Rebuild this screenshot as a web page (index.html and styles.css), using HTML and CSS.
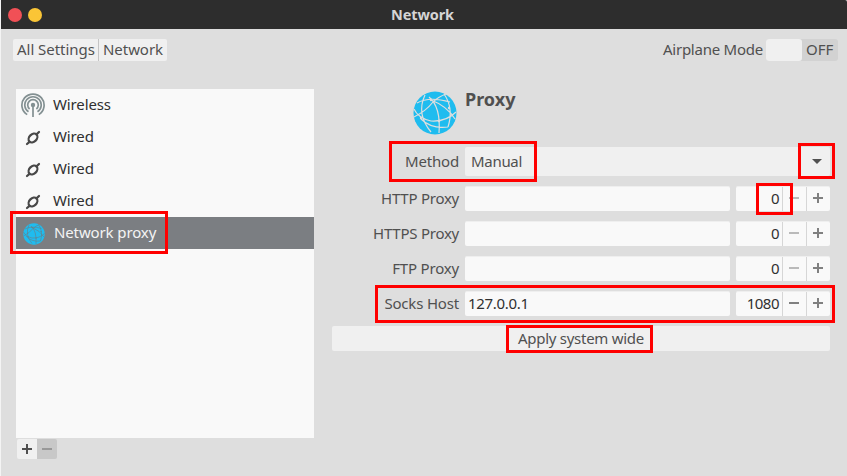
FILE: index.html
```html
<!DOCTYPE html>
<html lang="en">
<head>
<meta charset="utf-8">
<title>Network</title>
<link rel="stylesheet" href="styles.css">
</head>
<body>
<svg class="defs" aria-hidden="true">
  <symbol id="globe" viewBox="0 0 44 44">
    <circle cx="22" cy="22" r="21.5" fill="#1fbcef"/>
    <g fill="none" stroke="currentColor" stroke-width="1.2">
      <path d="M4 12Q16 5 37 11M16 6Q28 16 26 42M1 26Q13 20 20 11Q25 6 33 3M12 4Q3 23 18 41M1 18Q5 27 18 30Q33 31 43 21M18 9Q34 15 42 28M31 3Q41 17 35 36M8 28Q18 38 35 36"/>
    </g>
    <g fill="currentColor"><circle cx="18" cy="9" r="1.2"/><circle cx="8" cy="27" r="1.2"/><circle cx="26" cy="30" r="1.2"/><circle cx="36" cy="17" r="1.2"/></g>
  </symbol>
  <symbol id="wired" viewBox="0 0 16 16">
    <g fill="none" stroke="#484848" stroke-linecap="round"><path stroke-width="2.2" d="M2 14L4.5 11.8M11.5 4.4L14 2"/><ellipse cx="8" cy="8" rx="5" ry="3.7" transform="rotate(-45 8 8)" stroke-width="2.2"/></g>
  </symbol>
</svg>
<header class="titlebar"><i class="close"></i><i class="minimize"></i><h1>Network</h1></header>
<nav class="toolbar">
  <div class="crumbs"><span class="all">All Settings</span><span class="net">Network</span></div>
  <div class="airplane"><span>Airplane Mode</span><div class="switch"><b></b><span>OFF</span></div></div>
</nav>
<main>
  <aside>
    <ul>
      <li><svg class="wifi" viewBox="0 0 24 24"><g fill="none" stroke="#839092" stroke-width="1.7"><path d="M6.2 21.6A11.1 11.1 0 1 1 17.8 21.6M7.5 18.8A8.2 8.2 0 1 1 16.5 18.8M8.6 16A5.3 5.3 0 1 1 15.4 16"/><path d="M12 12V24"/></g><circle cx="12" cy="12" r="2.2" fill="#839092"/></svg><span>Wireless</span></li>
      <li><svg class="wire"><use href="#wired"/></svg><span>Wired</span></li>
      <li><svg class="wire"><use href="#wired"/></svg><span>Wired</span></li>
      <li><svg class="wire"><use href="#wired"/></svg><span>Wired</span></li>
      <li class="selected"><svg class="small-globe"><use href="#globe"/></svg><span>Network proxy</span></li>
    </ul>
    <div class="list-actions"><button class="plus" aria-label="Add"></button><button class="minus" aria-label="Remove"></button></div>
  </aside>
  <section>
    <div class="heading"><svg><use href="#globe"/></svg><h2>Proxy</h2></div>
    <div class="row method"><label>Method</label><div class="select"><span>Manual</span><i></i></div></div>
    <div class="row"><label class="http">HTTP Proxy</label><div class="field"></div><div class="spin"><span>0</span><button class="minus off" aria-label="Decrease"></button><button class="plus" aria-label="Increase"></button></div></div>
    <div class="row"><label class="https">HTTPS Proxy</label><div class="field"></div><div class="spin"><span>0</span><button class="minus off" aria-label="Decrease"></button><button class="plus" aria-label="Increase"></button></div></div>
    <div class="row"><label class="ftp">FTP Proxy</label><div class="field"></div><div class="spin"><span>0</span><button class="minus off" aria-label="Decrease"></button><button class="plus" aria-label="Increase"></button></div></div>
    <div class="row"><label class="socks">Socks Host</label><div class="field">127.0.0.1</div><div class="spin"><span>1080</span><button class="minus" aria-label="Decrease"></button><button class="plus" aria-label="Increase"></button></div></div>
    <button class="apply">Apply system wide</button>
  </section>
</main>
<div class="mark mark-nav"></div><div class="mark mark-method"></div><div class="mark mark-arrow"></div><div class="mark mark-port"></div><div class="mark mark-socks"></div><div class="mark mark-apply"></div>
</body>
</html>
```
FILE: styles.css
```css
* { box-sizing: border-box; }
body { margin: 0; width: 847px; height: 476px; overflow: hidden; position: relative; border-left: 1px solid #f4f4f4; background: #dedede; color: #505050; font: 15px/20px "Noto Sans", "Open Sans", sans-serif; letter-spacing: -.12px; white-space: nowrap; }
.defs { position: absolute; width: 0; height: 0; }
button { border: 0; padding: 0; font: inherit; color: inherit; letter-spacing: inherit; }
.titlebar { height: 29px; background: #2d2d2d; display: flex; align-items: center; padding-left: 7px; gap: 6px; border-radius: 0 2px 0 0; }
.titlebar i { width: 14px; height: 14px; border-radius: 50%; background: #f15056; }
.titlebar .minimize { background: #fac536; }
h1 { margin: 0 0 0 343px; padding-bottom: 2px; font-size: 14.5px; line-height: 26px; color: #d5d5d5; letter-spacing: -.1px; }
.toolbar { height: 60px; padding: 10px 9px 0 12px; display: flex; justify-content: space-between; align-items: flex-start; }
.crumbs { display: flex; height: 22px; background: #f0f0f0; border-radius: 2px; }
.all { width: 86px; padding-left: 4px; border-right: 1px solid #c4c4c4; letter-spacing: -.04px; }
.net { width: 68px; padding-left: 4px; letter-spacing: -.05px; }
.airplane { display: flex; gap: 3px; letter-spacing: -.24px; }
.switch { display: flex; width: 72px; height: 22px; border-radius: 3px; background: #d2d2d2; }
.switch b { width: 36px; background: #f0f0f0; border-radius: 3px; }
.switch span { padding-left: 4px; letter-spacing: 0; }
main { display: flex; align-items: flex-start; padding-left: 15px; gap: 18px; }
aside { width: 298px; }
ul { list-style: none; margin: 0; padding: 0; height: 349px; background: #f9f9f9; color: #303030; }
li { height: 32px; display: flex; align-items: center; }
li span { margin-left: 7px; padding-bottom: 2px; }
.wifi { width: 24px; height: 24px; margin-left: 5px; margin-right: 2px; }
.wire { width: 16px; height: 16px; margin: 1px 6px 0 9px; }
li:nth-child(-n+4) span { margin-left: 6px; }
.selected { background: #7b7e82; color: #f4f4f4; }
.small-globe { width: 22px; height: 22px; margin: 2px 1px 0 7px; color: #697d87; }
.selected span { margin-left: 8px; }
.list-actions { display: flex; padding: 1px 0 0 1px; }
.list-actions button { width: 20px; height: 20px; border-radius: 2px 0 0 2px; background-color: #f0f0f0; color: #505050; }
.list-actions .minus { border-radius: 0 2px 2px 0; background-color: #c8c8c8; color: #989898; }
.minus, .plus { background-image: linear-gradient(currentColor, currentColor); background-size: 10px 2px; background-position: center; background-repeat: no-repeat; }
.plus { background-image: linear-gradient(currentColor, currentColor), linear-gradient(currentColor, currentColor); background-size: 10px 2px, 2px 10px; }
section { width: 498px; display: flex; flex-direction: column; gap: 10px; }
.heading { height: 48px; display: flex; padding: 2px 0 0 81px; gap: 8px; color: #dedede; }
.heading svg { width: 44px; height: 44px; }
h2 { margin: -4px 0 0; font-size: 18px; line-height: 24px; color: #505050; letter-spacing: 0; }
.row { display: grid; grid-template-columns: 127px 265px 94px; column-gap: 6px; height: 25px; align-items: center; }
label { text-align: right; padding-bottom: 2px; letter-spacing: -.18px; }
.http, .https { letter-spacing: -.25px; }
.method { height: 29px; }
.select { grid-column: 2 / 4; height: 29px; background: #f0f0f0; border-radius: 2px; display: flex; align-items: center; justify-content: space-between; padding: 0 8px 0 6px; letter-spacing: -.3px; }
.select span { padding-bottom: 2px; }
.select i { border: 5px solid transparent; border-top-color: #505050; border-bottom: 0; }
.field { height: 25px; background: #f9f9f9; border-top: 1px solid #efefef; border-radius: 2px; color: #303030; padding: 1px 3px; letter-spacing: -.3px; }
.spin { height: 25px; display: grid; grid-template-columns: 46px 24px 24px; background: #f9f9f9; border-top: 1px solid #efefef; border-radius: 2px; color: #303030; }
.spin span { text-align: right; padding: 1px 3px 0 0; letter-spacing: -.5px; }
.spin button { background-color: transparent; border-left: 1px solid #d6d6d6; color: #808080; background-position: 6px 10px; }
.spin .plus { background-position: 6px 10px, 10px 6px; }
.spin .off { color: #bababa; }
.apply { height: 25px; background: #f0f0f0; border-radius: 2px; padding-bottom: 2px; letter-spacing: -.27px; }
.mark { position: absolute; border: 3px solid #f00; }
.mark-nav { left: 9px; top: 211px; width: 158px; height: 43px; }
.mark-method { left: 388px; top: 141px; width: 148px; height: 41px; }
.mark-arrow { left: 797px; top: 143px; width: 37px; height: 36px; }
.mark-port { left: 755px; top: 183px; width: 37px; height: 32px; }
.mark-socks { left: 374px; top: 285px; width: 460px; height: 38px; }
.mark-apply { left: 505px; top: 325px; width: 147px; height: 28px; }
```
